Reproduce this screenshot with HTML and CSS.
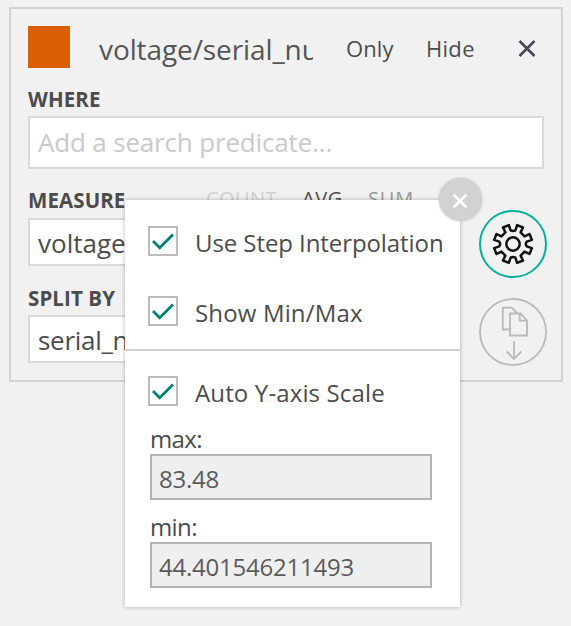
FILE: index.html
```html
<!DOCTYPE html>
<html lang="en">
<head>
<meta charset="utf-8">
<title>Series settings</title>
<link rel="stylesheet" href="styles.css">
</head>
<body>
<main class="card">
  <header class="head">
    <span class="swatch"></span>
    <span class="title">voltage/serial_nu</span>
    <span class="action only">Only</span>
    <span class="action hide">Hide</span>
    <svg class="remove" width="18" height="18" viewBox="0 0 18 18"><path d="M1.5 1L16.5 16M16.5 1L1.5 16"/></svg>
  </header>
  <div class="label where">WHERE</div>
  <div class="field search"><span class="placeholder">Add a search predicate...</span></div>
  <div class="lower">
    <div class="columns">
      <div class="measure-row">
        <span class="label measure">MEASURE</span>
        <span class="agg count">COUNT</span>
        <span class="agg avg">AVG</span>
        <span class="agg sum">SUM</span>
      </div>
      <div class="field"><span class="value">voltage</span></div>
      <div class="label split">SPLIT BY</div>
      <div class="field"><span class="value serial">serial_number</span></div>
    </div>
    <div class="tools">
      <svg width="68" height="68" viewBox="0 0 68 68" fill="none">
        <circle cx="34" cy="34" r="33" stroke="#00b294" stroke-width="2"/>
        <g stroke="#111" stroke-width="2.5" stroke-linejoin="round">
          <path d="M31.6 20.3L29.9 15.1L24 17.5L26.4 22.4L22.4 26.4L17.5 24L15.1 29.9L20.3 31.6Q22 34 20.3 36.4L15.1 38.1L17.5 44L22.4 41.6L26.4 45.6L24 50.5L29.9 52.9L31.6 47.7Q34 46.5 36.4 47.7L38.1 52.9L44 50.5L41.6 45.6L45.6 41.6L50.5 44L52.9 38.1L47.7 36.4Q46 34 47.7 31.6L52.9 29.9L50.5 24L45.6 26.4L41.6 22.4L44 17.5L38.1 15.1L36.4 20.3Q34 21.5 31.6 20.3Z"/>
          <circle cx="34" cy="34" r="6.7"/>
        </g>
      </svg>
      <svg width="68" height="68" viewBox="0 0 68 68" fill="none" stroke="#bababa">
        <circle cx="34" cy="34" r="33" stroke-width="1.8"/>
        <path stroke-width="1.8" d="M30 31.5H23.8V9.7H32.5L38 15M31 15.5H41.5L48 22.5V37.5H31ZM40.7 15.5V22.7H48M35 43V61M27.7 53.5L35 61L42.3 53.5"/>
      </svg>
    </div>
  </div>
</main>
<section class="popup">
  <div class="group first">
    <div class="option"><svg class="box" width="30" height="30" viewBox="0 0 30 30"><rect x="1" y="1" width="28" height="28"/><path d="M5 15L11.7 21.7L25 8.5"/></svg><span class="text step">Use Step Interpolation</span></div>
    <div class="option"><svg class="box" width="30" height="30" viewBox="0 0 30 30"><rect x="1" y="1" width="28" height="28"/><path d="M5 15L11.7 21.7L25 8.5"/></svg><span class="text show">Show Min/Max</span></div>
  </div>
  <div class="group">
    <div class="option"><svg class="box" width="30" height="30" viewBox="0 0 30 30"><rect x="1" y="1" width="28" height="28"/><path d="M5 15L11.7 21.7L25 8.5"/></svg><span class="text auto">Auto Y-axis Scale</span></div>
    <div class="bound max"><span class="caption">max:</span></div>
    <div class="number"><span class="digits">83.48</span></div>
    <div class="bound min"><span class="caption">min:</span></div>
    <div class="number"><span class="digits">44.401546211493</span></div>
  </div>
  <div class="close"><svg width="16" height="16" viewBox="0 0 16 16"><path d="M1.5 1.5L14.5 14.5M14.5 1.5L1.5 14.5"/></svg></div>
</section>
</body>
</html>
```
FILE: styles.css
```css
* { box-sizing: border-box; }
body {
  margin: 0;
  padding: 7px 8px 0 9px;
  height: 626px;
  overflow: hidden;
  position: relative;
  background: #f1f1f1;
  color: #4c4c4c;
  font-family: "Open Sans", "Noto Sans", sans-serif;
}
svg { display: block; flex: none; }
.card { width: 554px; height: 375px; border: 2px solid #d2d2d2; padding: 17px 14px 0 17px; }
.head { display: flex; height: 42px; }
.swatch { width: 42px; height: 42px; background: #d95f02; margin-right: 29px; }
.title { width: 214px; overflow: hidden; white-space: nowrap; font-size: 28px; line-height: 46px; letter-spacing: -0.1px; color: #555; }
.action { font-size: 22px; line-height: 45px; white-space: nowrap; }
.only { width: 80px; margin-left: 33px; letter-spacing: 0.1px; }
.hide { width: 92px; letter-spacing: 0.3px; }
.remove { margin-top: 14px; fill: none; stroke: #4a4855; stroke-width: 2.6; }
.label { font-size: 20.5px; font-weight: 700; line-height: 28px; white-space: nowrap; letter-spacing: 0.1px; }
.where { margin-top: 17px; height: 31px; }
.field { height: 48px; border: 2px solid #d9d9d9; background: #fff; padding-left: 8px; font-size: 26px; line-height: 47px; white-space: nowrap; overflow: hidden; }
.search { width: 516px; height: 53px; line-height: 48px; color: #cacaca; }
.placeholder { letter-spacing: -0.17px; }
.serial { letter-spacing: -0.3px; }
.lower { display: flex; height: 195px; }
.columns { width: 429px; padding-top: 17px; }
.measure-row { display: flex; height: 32px; }
.measure { width: 178px; }
.agg { font-size: 20px; line-height: 26px; }
.count { width: 96px; color: #d0d0d0; letter-spacing: 0.4px; }
.avg { width: 66px; letter-spacing: 0.6px; }
.sum { color: #999; letter-spacing: 0.8px; }
.split { margin-top: 18px; height: 31px; }
.tools { width: 68px; margin-left: 22px; padding-top: 41px; display: flex; flex-direction: column; gap: 20px; }
.popup { position: absolute; left: 125px; top: 200px; width: 335px; height: 407px; background: #fff; box-shadow: 0 0 4px rgba(0,0,0,.28); }
.group { padding: 25px 0 0 23px; }
.first { height: 151px; padding-top: 26px; border-bottom: 2px solid #d2d2d2; }
.option { display: flex; height: 30px; }
.first .option { margin-bottom: 40px; }
.box { margin-right: 17px; fill: none; stroke: #bcbcbc; stroke-width: 2; }
.box path { stroke: #008272; stroke-width: 2.8; }
.text { font-size: 24px; line-height: 34px; white-space: nowrap; }
.step { letter-spacing: -0.08px; }
.show { letter-spacing: 0.15px; }
.auto { letter-spacing: 0.14px; }
.caption { letter-spacing: -0.6px; }
.digits { letter-spacing: -0.22px; }
.bound { height: 48px; padding: 17px 0 0 2px; font-size: 24px; line-height: 32px; }
.min { height: 42px; padding-top: 11px; }
.number { width: 282px; height: 46px; margin-left: 2px; border: 2px solid #b3b3b3; background: #efefef; padding-left: 7px; font-size: 24px; line-height: 46px; color: #5b5b5b; }
.close { position: absolute; left: 314px; top: -22px; width: 43px; height: 43px; border-radius: 50%; background: #d2d2d2; box-shadow: 0 0 3px rgba(0,0,0,.22); display: flex; align-items: center; justify-content: center; padding: 3px 2px 0 0; }
.close svg { fill: none; stroke: #fff; stroke-width: 2.5; }
```
